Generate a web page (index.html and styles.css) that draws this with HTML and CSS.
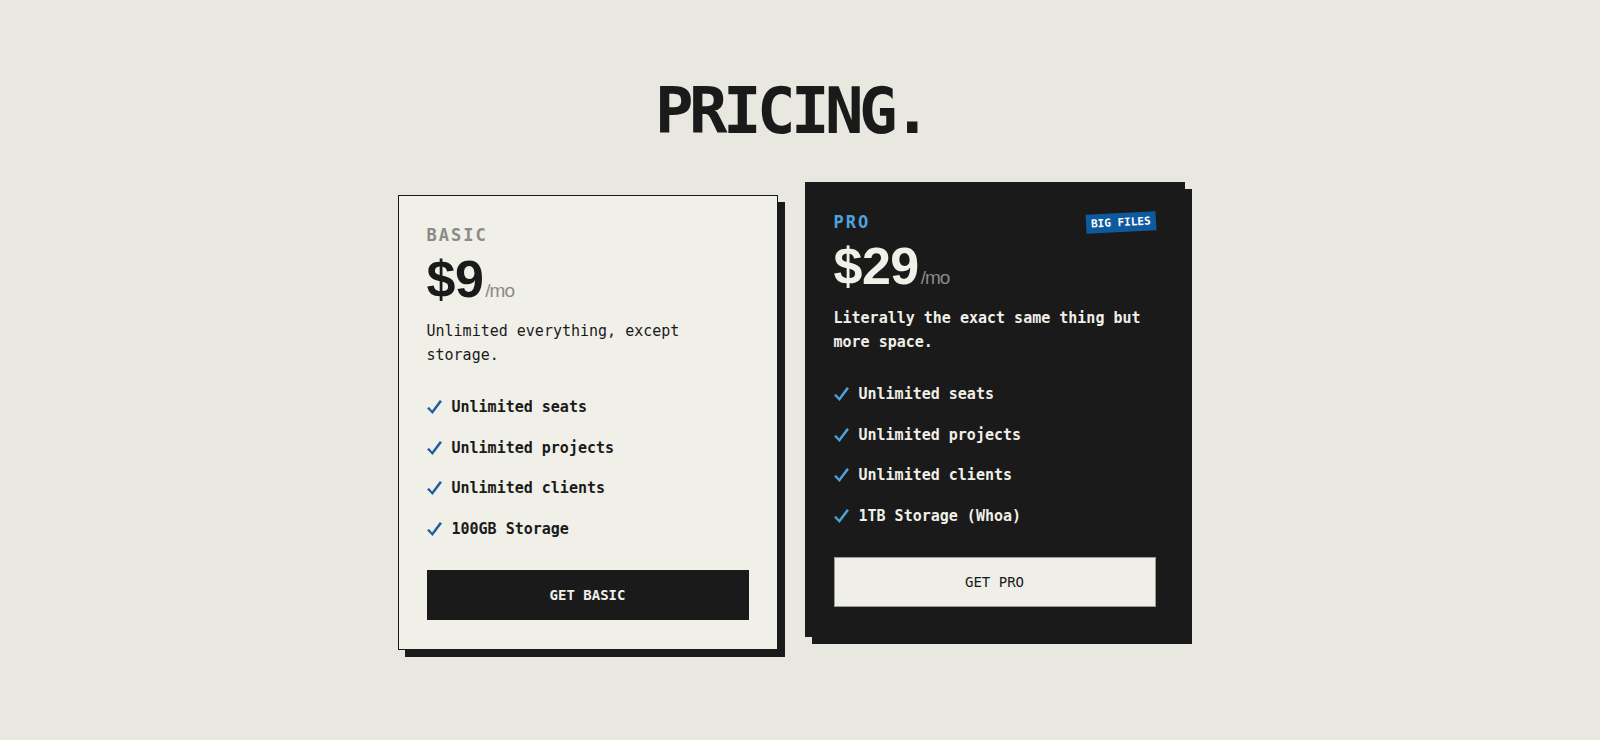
FILE: index.html
```html
<!DOCTYPE html>
<html lang="en">
<head>
<meta charset="utf-8">
<title>Pricing</title>
<link rel="stylesheet" href="styles.css">
</head>
<body>
<main class="page">
  <h1 class="title">PRICING.</h1>
  <div class="plans">
    <section class="card card-basic">
      <div class="card-head">
        <span class="tier">BASIC</span>
      </div>
      <div class="price"><span class="amount">$9</span><span class="per">/mo</span></div>
      <p class="desc">Unlimited everything, except storage.</p>
      <ul class="features">
        <li><svg class="check" viewBox="0 0 15 14" width="15" height="14"><path d="M0 8.2 L2.1 6.9 L5.1 10.4 L12.9 0 L15 1.5 L5.5 14 Z"/></svg><span>Unlimited seats</span></li>
        <li><svg class="check" viewBox="0 0 15 14" width="15" height="14"><path d="M0 8.2 L2.1 6.9 L5.1 10.4 L12.9 0 L15 1.5 L5.5 14 Z"/></svg><span>Unlimited projects</span></li>
        <li><svg class="check" viewBox="0 0 15 14" width="15" height="14"><path d="M0 8.2 L2.1 6.9 L5.1 10.4 L12.9 0 L15 1.5 L5.5 14 Z"/></svg><span>Unlimited clients</span></li>
        <li><svg class="check" viewBox="0 0 15 14" width="15" height="14"><path d="M0 8.2 L2.1 6.9 L5.1 10.4 L12.9 0 L15 1.5 L5.5 14 Z"/></svg><span>100GB Storage</span></li>
      </ul>
      <button class="btn btn-dark">GET BASIC</button>
    </section>
    <section class="card card-pro">
      <div class="card-head">
        <span class="tier">PRO</span>
        <span class="badge">BIG FILES</span>
      </div>
      <div class="price"><span class="amount">$29</span><span class="per">/mo</span></div>
      <p class="desc">Literally the exact same thing but more space.</p>
      <ul class="features">
        <li><svg class="check" viewBox="0 0 15 14" width="15" height="14"><path d="M0 8.2 L2.1 6.9 L5.1 10.4 L12.9 0 L15 1.5 L5.5 14 Z"/></svg><span>Unlimited seats</span></li>
        <li><svg class="check" viewBox="0 0 15 14" width="15" height="14"><path d="M0 8.2 L2.1 6.9 L5.1 10.4 L12.9 0 L15 1.5 L5.5 14 Z"/></svg><span>Unlimited projects</span></li>
        <li><svg class="check" viewBox="0 0 15 14" width="15" height="14"><path d="M0 8.2 L2.1 6.9 L5.1 10.4 L12.9 0 L15 1.5 L5.5 14 Z"/></svg><span>Unlimited clients</span></li>
        <li><svg class="check" viewBox="0 0 15 14" width="15" height="14"><path d="M0 8.2 L2.1 6.9 L5.1 10.4 L12.9 0 L15 1.5 L5.5 14 Z"/></svg><span>1TB Storage (Whoa)</span></li>
      </ul>
      <button class="btn btn-light">GET PRO</button>
    </section>
  </div>
</main>
</body>
</html>
```

FILE: styles.css
```css
* { box-sizing: border-box; }

html {
  background: #e8e7e0;
}

body {
  margin: 0;
  padding: 0;
  color: #1a1a1a;
  font-family: "DejaVu Sans Mono", "Liberation Mono", monospace;
}

.page {
  padding: 79px 18px 60px 0;
  display: flex;
  flex-direction: column;
  align-items: center;
}

.title {
  margin: 0;
  font-family: "DejaVu Sans Mono", monospace;
  font-weight: 700;
  font-size: 64px;
  line-height: 64px;
  letter-spacing: -4.5px;
  color: #1a1a1a;
}

.plans {
  margin-top: 52px;
  display: flex;
  gap: 27px;
  align-items: flex-start;
}

.card {
  width: 380px;
  padding: 28px 28px 29px;
  border: 1px solid #1a1a1a;
  box-shadow: 7px 7px 0 #1a1a1a;
}

.card-basic {
  background: #f0efe8;
}

.card-pro {
  background: #1a1a1a;
  color: #f0efe8;
  transform: translateY(-13px);
}

.card-head {
  height: 23px;
  display: flex;
  justify-content: space-between;
  align-items: center;
}

.tier {
  font-size: 17px;
  line-height: 23px;
  font-weight: 700;
  letter-spacing: 2px;
  color: #8a8a86;
}

.card-pro .tier {
  color: #4ea3dc;
}

.badge {
  display: inline-block;
  background: #0e5a9e;
  color: #ffffff;
  font-size: 11px;
  font-weight: 700;
  line-height: 13px;
  padding: 3px 5px;
  transform: rotate(-3deg);
}

.price {
  margin-top: 6px;
  height: 52px;
  font-family: "Liberation Sans", Arial, sans-serif;
  font-weight: 700;
  font-size: 52px;
  line-height: 52px;
  white-space: nowrap;
}

.amount {
  letter-spacing: -0.5px;
}

.per {
  font-family: "Liberation Sans", Arial, sans-serif;
  font-weight: 400;
  font-size: 19px;
  line-height: 1;
  letter-spacing: -1px;
  color: #8a8a86;
  margin-left: 2px;
}

.desc {
  margin: 14px 0 0;
  font-size: 15px;
  line-height: 24px;
}

.card-pro .desc {
  font-weight: 700;
}

.features {
  list-style: none;
  margin: 28px 0 0;
  padding: 0;
  display: flex;
  flex-direction: column;
  gap: 16.6px;
}

.features li {
  display: flex;
  align-items: center;
  gap: 10px;
  font-size: 15px;
  line-height: 24px;
  font-weight: 700;
}

.check {
  flex: none;
  fill: #1f5e9f;
}

.card-pro .check {
  fill: #4ea3dc;
}

.btn {
  display: block;
  width: 100%;
  height: 50px;
  margin-top: 29px;
  font-family: "DejaVu Sans Mono", monospace;
  font-size: 14px;
  cursor: pointer;
}

.btn-dark {
  background: #1a1a1a;
  color: #f0efe8;
  border: 1px solid #1a1a1a;
  font-weight: 700;
}

.btn-light {
  background: #efeee7;
  color: #1a1a1a;
  border: 1px solid #9a9a96;
  font-weight: 400;
}
```
